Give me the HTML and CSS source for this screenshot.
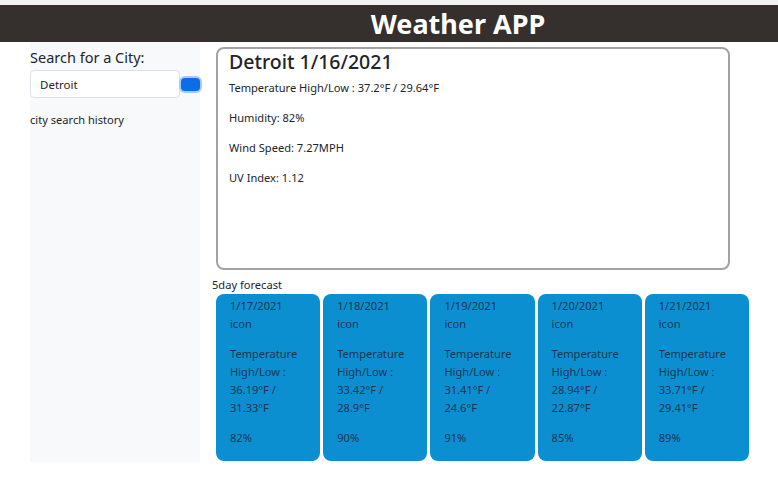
FILE: index.html
```html
<!DOCTYPE html>
<html>
<head>
<meta charset="utf-8">
<link rel="stylesheet" href="styles.css">
</head>
<body>
<div class="topstrip"></div>
<header class="header"><h1>Weather APP</h1></header>
<div class="layout">
  <aside class="sidebar">
    <label class="search-label">Search for a City:</label>
    <div class="search-row">
      <input class="search-input" type="text" value="Detroit">
      <button class="search-btn" aria-label="search"></button>
    </div>
    <p class="history">city search history</p>
  </aside>
  <main class="main">
    <section class="today">
      <h2>Detroit 1/16/2021</h2>
      <p>Temperature High/Low : 37.2°F / 29.64°F</p>
      <p>Humidity: 82%</p>
      <p>Wind Speed: 7.27MPH</p>
      <p>UV Index: 1.12</p>
    </section>
    <div class="fc-label">5day forecast</div>
    <div class="forecast">
      <div class="day"><p>1/17/2021</p><p>icon</p><p class="gap">Temperature High/Low : 36.19°F / 31.33°F</p><p class="gap">82%</p></div>
      <div class="day"><p>1/18/2021</p><p>icon</p><p class="gap">Temperature High/Low : 33.42°F / 28.9°F</p><p class="gap">90%</p></div>
      <div class="day"><p>1/19/2021</p><p>icon</p><p class="gap">Temperature High/Low : 31.41°F / 24.6°F</p><p class="gap">91%</p></div>
      <div class="day"><p>1/20/2021</p><p>icon</p><p class="gap">Temperature High/Low : 28.94°F / 22.87°F</p><p class="gap">85%</p></div>
      <div class="day"><p>1/21/2021</p><p>icon</p><p class="gap">Temperature High/Low : 33.71°F / 29.41°F</p><p class="gap">89%</p></div>
    </div>
  </main>
</div>
</body>
</html>
```
FILE: styles.css
```css
* { box-sizing: border-box; }
html, body { margin: 0; padding: 0; background: #fff; }
body {
  font-family: "Noto Sans", "Open Sans", sans-serif;
  color: #212529;
  font-size: 11.1px;
}
.topstrip { height: 5px; background: #f1f1f1; }
.header {
  height: 37px;
  background: #352f2d;
  color: #fff;
  display: flex;
  align-items: center;
  justify-content: center;
  padding-left: 138px;
}
.header h1 {
  margin: 0;
  font-size: 27px;
  font-weight: 700;
  line-height: 1;
}
.layout {
  display: flex;
  padding-left: 30px;
  gap: 12px;
}
.sidebar {
  width: 170px;
  height: 420px;
  background: #f8f9fa;
  padding-top: 5px;
}
.search-label {
  display: block;
  font-size: 14.5px;
  line-height: 20px;
  color: #212529;
}
.search-row {
  display: flex;
  align-items: center;
  margin-top: 3px;
}
.search-input {
  width: 150px;
  height: 28px;
  border: 1px solid #dde1e5;
  border-radius: 4px;
  padding: 0 9px;
  font-family: inherit;
  font-size: 11.5px;
  color: #212529;
  background: #fff;
}
.search-btn {
  width: 21px;
  height: 13px;
  border: none;
  border-radius: 4px;
  background: #0a6fe6;
  box-shadow: 0 0 0 2px #a9c9f3;
  padding: 0;
  margin-left: 1px;
}
.history {
  margin: 14px 0 0;
  line-height: 16px;
}
.main {
  display: flex;
  flex-direction: column;
}
.today {
  margin: 5px 0 0 4px;
  width: 514px;
  height: 223px;
  border: 2px solid #a3a3a3;
  border-radius: 8px;
  padding: 0 11px;
}
.today h2 {
  margin: 0 0 5px;
  font-size: 19.5px;
  font-weight: 500;
  line-height: 26px;
}
.today p {
  margin: 0 0 14px;
  line-height: 16px;
}
.fc-label {
  margin-top: 8px;
  line-height: 14px;
}
.forecast {
  display: flex;
  gap: 3px;
  margin: 2px 0 0 4px;
}
.day {
  width: 104.2px;
  height: 167px;
  background: #0b8fd0;
  border-radius: 8px;
  padding: 3px 14px;
  color: #1d3550;
}
.day p {
  margin: 0;
  line-height: 18px;
}
.day p.gap { margin-top: 12px; }
```
